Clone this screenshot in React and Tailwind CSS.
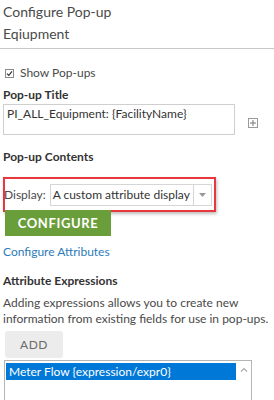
import { useState } from "react";

const font = { fontFamily: "Lato, 'Noto Sans', sans-serif" };

function App() {
  const [show, setShow] = useState(true);

  return (
    <div
      className="w-[274px] h-[400px] overflow-hidden bg-white text-[#4a4a4a] text-[12px]"
      style={font}
    >
      <div className="px-[3px] pt-[3px]">
        <div className="text-[14px] leading-[18px]">Configure Pop-up</div>
        <div className="text-[14px] leading-[18px] mt-[4px]">Eqiupment</div>
      </div>
      <div className="mt-[5px] border-t border-[#c8c8c8]" />

      <div className="px-[3px]">
        <label className="flex items-center gap-[6px] mt-[16px] ml-[2px]">
          <span
            className="w-[9px] h-[9px] border border-[#8a8a8a] bg-white flex items-center justify-center"
            onClick={() => setShow(!show)}
          >
            {show && (
              <svg width="7" height="7" viewBox="0 0 7 7">
                <path d="M1 3.6 L2.8 5.4 L6 1.3" fill="none" stroke="#333" strokeWidth="1.2" />
              </svg>
            )}
          </span>
          <span className="leading-[16px]">Show Pop-ups</span>
        </label>

        <div className="font-bold text-[#333] mt-[6px] leading-[16px]">Pop-up Title</div>
        <div className="flex items-center mt-[1px]">
          <div className="w-[232px] h-[31px] border border-[#cfcfcf] px-[3px] pt-[1px] leading-[16px] text-[#333]">
            PI_ALL_Equipment: {"{FacilityName}"}
          </div>
          <div className="ml-[13px] mt-[6px] w-[10px] h-[10px] border border-[#9a9a9a] flex items-center justify-center">
            <svg width="8" height="8" viewBox="0 0 8 8">
              <path d="M4 1 V7 M1 4 H7" stroke="#777" strokeWidth="1" />
            </svg>
          </div>
        </div>

        <div className="font-bold text-[#333] mt-[14px] leading-[16px]">Pop-up Contents</div>

        <div className="mt-[12px] w-[213px] h-[35px] border-2 border-[#e8383d] shadow-[1px_2px_3px_rgba(0,0,0,0.25)] flex items-center">
          <span className="ml-[-1px] mr-[4px]">Display:</span>
          <div className="flex h-[22px] w-[162px] border border-[#d6d6d6] items-stretch">
            <div className="flex-1 px-[2px] leading-[20px] text-[#333] whitespace-nowrap">
              A custom attribute display
            </div>
            <div className="w-[18px] border-l border-[#d6d6d6] flex items-center justify-center">
              <svg width="7" height="4" viewBox="0 0 7 4">
                <path d="M0 0 H7 L3.5 4 Z" fill="#999" />
              </svg>
            </div>
          </div>
        </div>

        <button className="block mt-[-2px] ml-[2px] w-[106px] h-[26px] bg-[#6a9e3b] text-white font-bold tracking-[0.6px] text-[13px] leading-[26px]">
          CONFIGURE
        </button>

        <div className="mt-[8px] text-[#2b7bb9] leading-[16px]">Configure Attributes</div>

        <div className="font-bold text-[#333] mt-[13px] leading-[16px]">Attribute Expressions</div>
        <p className="mt-[6px] leading-[16px]">
          Adding expressions allows you to create new information from existing fields for use in pop-ups.
        </p>

        <button className="block mt-[4px] ml-[2px] w-[58px] h-[27px] bg-[#ececec] rounded-[3px] text-[#6b6b6b] tracking-[0.5px] text-[12px]">
          ADD
        </button>

        <div className="mt-[2px] ml-[1px] w-[248px] h-[60px] border border-[#b5b5b5] flex">
          <div className="flex-1 pt-[2px] pl-[1px]">
            <div className="bg-[#0078d7] text-white leading-[17px] pl-[3px]">
              Meter Flow {"{expression/expr0}"}
            </div>
          </div>
          <div className="w-[15px] flex justify-center pt-[6px]">
            <svg width="8" height="5" viewBox="0 0 8 5">
              <path d="M1 4.5 L4 1.5 L7 4.5" fill="none" stroke="#aaa" strokeWidth="1.2" />
            </svg>
          </div>
        </div>
      </div>
    </div>
  );
}

export default App;
